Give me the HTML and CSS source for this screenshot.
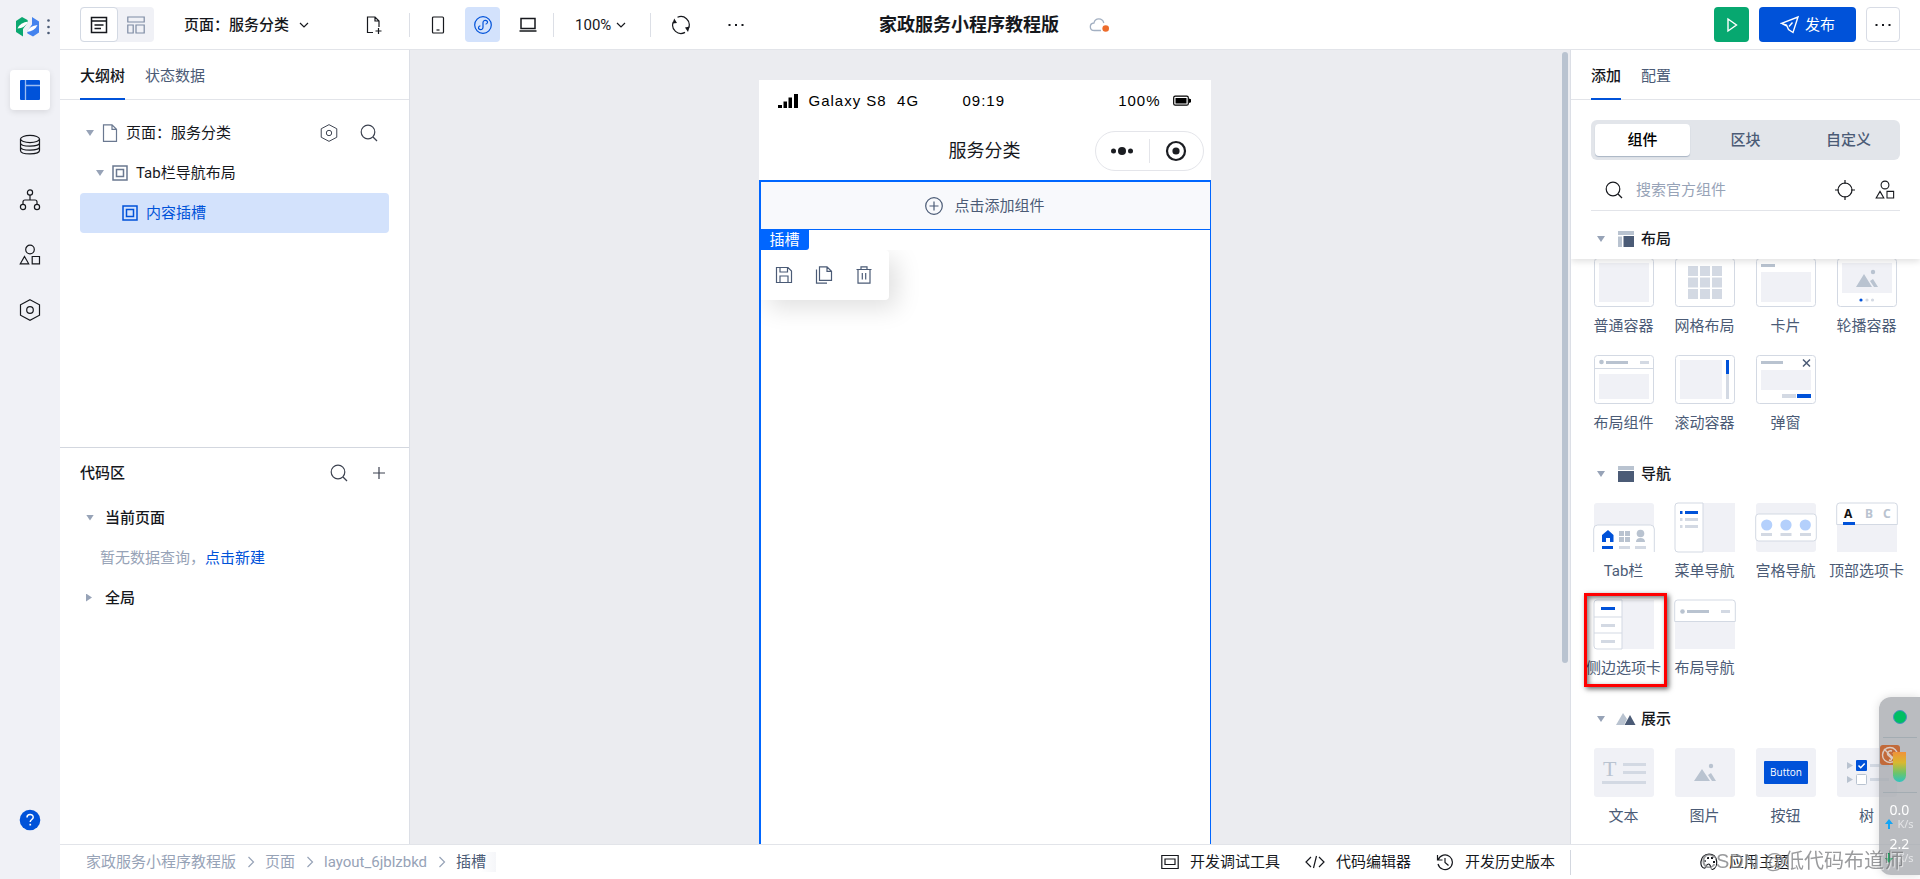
FILE: index.html
```html
<!DOCTYPE html>
<html lang="zh-CN">
<head>
<meta charset="utf-8">
<title>家政服务小程序教程版</title>
<link rel="stylesheet" href="styles.css">
</head>
<body>
<svg class="sprite" aria-hidden="true">
  <symbol id="search" viewBox="0 0 18 18"><circle cx="8" cy="8" r="6.8"/><path d="M13 13l4 4"/></symbol>
  <symbol id="chevron" viewBox="0 0 12 12"><path d="M2 4l4 4 4-4"/></symbol>
  <symbol id="crumb" viewBox="0 0 8 12"><path d="M1.5 1l5 5-5 5"/></symbol>
  <symbol id="shapes" viewBox="0 0 22 22"><circle cx="11" cy="5.5" r="4.3"/><path d="M5.5 12.5l4.2 7.3H1.3zM13.2 12.5h7.3v7.3h-7.3z"/></symbol>
  <symbol id="slot" viewBox="0 0 16 16"><path d="M1 1h14v14H1z M4.5 4.5h7v7h-7z"/></symbol>
  <symbol id="hexagon" viewBox="0 0 22 22"><path d="M11 .8l9.5 5v10.4l-9.5 5-9.5-5V5.800z"/><circle cx="11" cy="11" r="3.300"/></symbol>
  <symbol id="dots" viewBox="0 0 18 18"><path class="solid" d="M1.500 8h2v2h-2zM8 8h2v2H8zM14.500 8h2v2h-2z"/></symbol>
</svg>
<div class="app">
  <nav class="rail" aria-label="主导航">
    <button class="brand" aria-label="首页">
      <svg width="36" height="22" viewBox="0 0 36 22">
        <path fill="#0ba870" d="M0 5l6-4 5.500 3 .5 2-5 7v7.500L0 16z"/>
        <path fill="#fff" d="M1.500 12.500Q4 6.500 12.500 5.500 9 12 1.500 12.500z"/>
        <g transform="rotate(180 11.500 10.800)"><path fill="#4483ee" d="M0 5l6-4 5.500 3 .5 2-5 7v7.500L0 16z"/><path fill="#fff" d="M1.500 12.500Q4 6.500 12.500 5.500 9 12 1.500 12.500z"/></g>
        <circle cx="32.500" cy="4.500" r="1.300" fill="#4b5b76"/><circle cx="32.500" cy="11" r="1.300" fill="#4b5b76"/><circle cx="32.500" cy="17" r="1.300" fill="#4b5b76"/>
      </svg>
    </button>
    <button class="rail-item active" aria-label="页面设计">
      <svg width="20" height="20" viewBox="0 0 20 20"><rect width="20" height="20" rx="1" fill="#0052d9"/><path d="M5.500 0v20M5.500 5.500H20" stroke="#9bbcf2" stroke-width="1.300"/></svg>
    </button>
    <button class="rail-item" aria-label="数据源">
      <svg class="ico" width="22" height="22" viewBox="0 0 22 22"><ellipse cx="11" cy="5" rx="9.500" ry="3.600"/><path d="M1.500 5v11.500c0 4.600 19 4.600 19 0V5M1.500 9c0 4.200 19 4.200 19 0M1.500 13c0 4.200 19 4.200 19 0"/></svg>
    </button>
    <button class="rail-item" aria-label="流程">
      <svg class="ico" width="22" height="22" viewBox="0 0 22 22"><circle cx="11" cy="3.500" r="2.600"/><circle cx="4" cy="18" r="2.600"/><circle cx="18" cy="18" r="2.600"/><path d="M11 6v5M4 15.400V13q0-2 2-2h10q2 0 2 2v2.400"/></svg>
    </button>
    <button class="rail-item" aria-label="组件库"><svg class="ico" width="22" height="22"><use href="#shapes"/></svg></button>
    <button class="rail-item" aria-label="设置"><svg class="ico" width="22" height="22"><use href="#hexagon"/></svg></button>
    <button class="rail-item help" aria-label="帮助">
      <svg width="22" height="22" viewBox="0 0 22 22"><circle cx="11" cy="11" r="10.300" fill="#0052d9"/><path d="M8 8.500c0-4 6.200-3.800 6.200-.3 0 2.300-3 2.300-3 4.900" fill="none" stroke="#fff" stroke-width="1.500"/><path d="M10.400 14.800h1.700v1.700h-1.700z" fill="#fff"/></svg>
    </button>
  </nav>

  <div class="workspace">
    <header class="topbar">
      <div class="tools">
        <div class="view-toggle">
          <button class="toggle on" aria-label="大纲"><svg class="ico thick" width="18" height="18" viewBox="0 0 18 18"><path d="M1.500 1.500h15v15h-15zM1.500 5h15M4.500 9h9M4.500 12.500h6.500"/></svg></button>
          <button class="toggle" aria-label="布局"><svg class="ico slate" width="18" height="18" viewBox="0 0 18 18"><path d="M.8 1h16.400v5H.8zM.8 9h5.400v8H.8zM9 9h8.200v8H9z"/></svg></button>
        </div>
        <button class="page-pick">页面：服务分类 <svg class="ico" width="12" height="12"><use href="#chevron"/></svg></button>
        <button class="tool add-page" aria-label="新建页面"><svg class="ico" width="18" height="20" viewBox="0 0 18 20"><path d="M8 17.500H2.500V2H10l4 4v6M10 2v4h4M13.500 13v6M10.500 16h6"/></svg></button>
        <span class="rule"></span>
        <div class="devices">
          <button class="tool" aria-label="手机"><svg class="ico" width="14" height="18" viewBox="0 0 14 18"><rect x="1.500" y="1" width="11" height="16" rx="1"/><path d="M5.500 14h3"/></svg></button>
          <button class="tool on" aria-label="小程序"><svg class="ico" width="18" height="18" viewBox="0 0 18 18"><circle cx="9" cy="9" r="8.300"/><path d="M9 11.300c0 3.500-5 2.700-4.500.2.200-1 1-1.400 1.900-1.700M9 11.300V6.700c0-3.500 5-2.700 4.500-.2-.2 1-1 1.400-1.900 1.700"/></svg></button>
          <button class="tool" aria-label="电脑"><svg class="ico thick" width="18" height="16" viewBox="0 0 18 16"><path d="M2 1.500h14v10H2zM.5 14h17"/></svg></button>
        </div>
        <span class="rule"></span>
        <button class="zoom">100% <svg class="ico" width="12" height="12"><use href="#chevron"/></svg></button>
        <span class="rule"></span>
        <button class="tool refresh" aria-label="刷新"><svg class="ico" width="20" height="20" viewBox="0 0 20 20"><path d="M6.500 2.300a8.300 8.300 0 0 1 11.300 10.200M14 17.400A8.300 8.300 0 0 1 2.300 7"/><path class="solid" d="M1.500 8.500L3.200 3.500 6 8zM18.700 11.500L17 17l-3-4.500z"/></svg></button>
        <button class="tool" aria-label="更多"><svg class="ico" width="18" height="18"><use href="#dots"/></svg></button>
      </div>
      <div class="project">
        <h1>家政服务小程序教程版</h1>
        <svg width="22" height="16" viewBox="0 0 22 16"><path d="M12 13.500H5.500C0 13.500 0 6.500 5 6 6 .5 13.500.5 14.800 6" fill="none" stroke="#a3b0c2" stroke-width="1.300"/><circle cx="16.700" cy="11.500" r="3.300" fill="#ed6c2b"/></svg>
      </div>
      <div class="actions">
        <button class="run" aria-label="预览"><svg width="18" height="18" viewBox="0 0 18 18"><path d="M5 3l8.500 6L5 15z" fill="none" stroke="#fff" stroke-width="1.400"/></svg></button>
        <button class="publish"><svg width="20" height="20" viewBox="0 0 20 20"><path d="M1.500 8.300L18 2l-5 15.500-4.500-3-2-4.500zM9 11.500l3.500-4M2 8.500l5 2.500" fill="none" stroke="#fff" stroke-width="1.400"/></svg>发布</button>
        <button class="more" aria-label="更多操作"><svg class="ico" width="18" height="18"><use href="#dots"/></svg></button>
      </div>
    </header>

    <div class="main">
      <aside class="left">
        <section class="half">
          <div class="tabs" role="tablist"><button class="tab on" role="tab">大纲树</button><button class="tab" role="tab">状态数据</button></div>
          <ul class="tree">
            <li class="node"><i class="caret"></i><svg class="ico slate" width="16" height="18" viewBox="0 0 16 18"><path d="M1.500.8H10l4.500 4.500v12h-13zM10 .8v4.500h4.500"/></svg><span>页面：服务分类</span>
              <span class="node-tools"><button class="tool-s" aria-label="页面设置"><svg class="ico" width="18" height="18"><use href="#hexagon"/></svg></button><button class="tool-s" aria-label="搜索"><svg class="ico" width="18" height="18"><use href="#search"/></svg></button></span></li>
            <li class="node lv2"><i class="caret"></i><svg class="ico thick slate" width="16" height="16"><use href="#slot"/></svg><span>Tab栏导航布局</span></li>
            <li class="node lv3 selected"><svg class="ico thick" width="16" height="16"><use href="#slot"/></svg><span>内容插槽</span></li>
          </ul>
        </section>
        <section class="half code">
          <div class="code-head"><h2>代码区</h2><span class="node-tools"><button class="tool-s" aria-label="搜索代码"><svg class="ico" width="18" height="18"><use href="#search"/></svg></button><button class="tool-s" aria-label="新建"><svg class="ico" width="18" height="18" viewBox="0 0 18 18"><path d="M9 3v12M3 9h12"/></svg></button></span></div>
          <div class="group"><i class="caret"></i>当前页面</div>
          <p class="empty">暂无数据查询，<a href="#new">点击新建</a></p>
          <div class="group"><i class="caret closed"></i>全局</div>
        </section>
      </aside>

      <main class="canvas">
        <div class="phone">
          <div class="status">
            <svg width="22" height="16" viewBox="0 0 22 16"><path d="M1 12h4v3H1zM6.500 8.500h3.500V15H6.500zM11.500 4.500H15V15h-3.500zM17 1h4v14h-4z"/></svg>
            <span class="carrier">Galaxy S8&nbsp; 4G</span><span class="clock">09:19</span><span class="charge">100%</span>
            <svg width="18" height="12" viewBox="0 0 18 12"><rect x=".7" y="1.200" width="14.600" height="9" rx="1.500" fill="none" stroke="#000" stroke-width="1.200"/><path d="M2.500 3h11v5.500h-11zM16 3.500l2 .8v3l-2 .8z"/></svg>
          </div>
          <div class="nav-title"><span>服务分类</span>
            <div class="capsule">
              <button aria-label="菜单"><svg width="24" height="10" viewBox="0 0 24 10"><circle cx="3.500" cy="5" r="2.500"/><circle cx="12" cy="5" r="4"/><circle cx="20.500" cy="5" r="2.500"/></svg></button>
              <button aria-label="关闭"><svg width="22" height="22" viewBox="0 0 22 22"><circle cx="11" cy="11" r="9" fill="none" stroke="#1b1d22" stroke-width="2.200"/><circle cx="11" cy="11" r="3.600"/></svg></button>
            </div>
          </div>
          <div class="selection">
            <button class="add"><svg class="ico" width="18" height="18" viewBox="0 0 18 18"><circle cx="9" cy="9" r="8.300"/><path d="M9 4.500v9M4.500 9h9"/></svg>点击添加组件</button>
            <div class="tag">插槽</div>
            <div class="mini-tools">
              <button aria-label="保存"><svg class="ico" width="18" height="18" viewBox="0 0 18 18"><path d="M1.500 1.500H13l3.500 3.500v11.500h-15zM5 1.500V6h7.500V1.500M5 16.500V10h8v6.500"/></svg></button>
              <button aria-label="复制"><svg class="ico" width="18" height="18" viewBox="0 0 18 18"><path d="M4.500.8h7.500l4.500 4.500v9h-12zM12 .8v4.500h4.500M1.500 3.500v13.700h10.500"/></svg></button>
              <button aria-label="删除"><svg class="ico" width="18" height="18" viewBox="0 0 18 18"><path d="M1.500 3.500h15M6 3.500V.8h6v2.700M3 3.500v13.700h12V3.500M7.300 7v6.500M10.700 7v6.500"/></svg></button>
            </div>
          </div>
        </div>
        <span class="scroll-thumb"></span>
      </main>

      <aside class="right">
        <div class="tabs" role="tablist"><button class="tab on" role="tab">添加</button><button class="tab" role="tab">配置</button></div>
        <div class="segments"><button class="seg on">组件</button><button class="seg">区块</button><button class="seg">自定义</button></div>
        <div class="search"><svg class="ico" width="18" height="18"><use href="#search"/></svg><input type="text" placeholder="搜索官方组件" aria-label="搜索官方组件">
          <button class="tool-s" aria-label="定位"><svg class="ico" width="20" height="20" viewBox="0 0 20 20"><circle cx="10" cy="10" r="7"/><path d="M10 0v4M10 16v4M0 10h4M16 10h4"/></svg></button>
          <button class="tool-s" aria-label="组件库"><svg class="ico" width="20" height="20"><use href="#shapes"/></svg></button></div>
        <div class="library">
          <section class="pack pinned">
            <h3><i class="caret"></i><svg width="16" height="16" viewBox="0 0 16 16"><path d="M0 0h16v4H0zM0 5.500h4V16H0z" fill="#b9c3d0"/><path d="M5.500 5H16v11H5.500z" fill="#4b5b76"/></svg>布局</h3>
            <div class="cells">
              <button class="cell"><svg width="60" height="49" viewBox="0 0 60 49"><rect class="frame" x=".5" y=".5" width="59" height="48" rx="3"/><path class="pale" d="M5 5h50v39H5z"/></svg>普通容器</button>
              <button class="cell"><svg width="60" height="49" viewBox="0 0 60 49"><rect class="frame" x=".5" y=".5" width="59" height="48" rx="3"/><path class="light" d="M13 8h10v10H13zM25 8h10v10H25zM37 8h10v10H37zM13 19.500h10v10H13zM25 19.500h10v10H25zM37 19.500h10v10H37zM13 31h10v10H13zM25 31h10v10H25zM37 31h10v10H37z"/></svg>网格布局</button>
              <button class="cell"><svg width="60" height="49" viewBox="0 0 60 49"><rect class="frame" x=".5" y=".5" width="59" height="48" rx="3"/><path class="mid" d="M5 6h14v3H5z"/><path class="pale" d="M5 14h50v30H5z"/></svg>卡片</button>
              <button class="cell"><svg width="60" height="49" viewBox="0 0 60 49"><rect class="frame" x=".5" y=".5" width="59" height="48" rx="3"/><path class="pale" d="M5 5h50v30H5z"/><path class="mid" d="M19 29l8-13 8 13zM33 23l3-2 5 8h-4z"/><circle class="mid" cx="36" cy="14" r="2.200"/><circle class="blue" cx="24" cy="42" r="1.600"/><circle class="light" cx="30" cy="42" r="1.600"/><circle class="light" cx="35.500" cy="42" r="1.600"/></svg>轮播容器</button>
              <button class="cell"><svg width="60" height="49" viewBox="0 0 60 49"><rect class="frame" x=".5" y=".5" width="59" height="48" rx="3"/><path class="edge" d="M0 13.500h60"/><circle class="mid" cx="7.500" cy="7" r="2.300"/><path class="mid" d="M12 6h22v3H12z"/><path class="light" d="M46 6h9v3h-9z"/><path class="pale" d="M5 19h50v25H5z"/></svg>布局组件</button>
              <button class="cell"><svg width="60" height="49" viewBox="0 0 60 49"><rect class="frame" x=".5" y=".5" width="59" height="48" rx="3"/><path class="pale" d="M5 5h42v39H5z"/><path class="light" d="M51 5h3v39h-3z"/><path class="blue" d="M51 5h3v14h-3z"/></svg>滚动容器</button>
              <button class="cell"><svg width="60" height="49" viewBox="0 0 60 49"><rect class="frame" x=".5" y=".5" width="59" height="48" rx="3"/><path class="mid" d="M5 6h22v3H5z"/><path d="M47 4.500l7 7M54 4.500l-7 7" stroke="#4b5b76" stroke-width="1.500"/><path class="pale" d="M5 15h50v20H5z"/><path class="light" d="M26 39h14v4H26z"/><path class="blue" d="M41 39h14v4H41z"/></svg>弹窗</button>
            </div>
          </section>
          <section class="pack">
            <h3><i class="caret"></i><svg width="16" height="16" viewBox="0 0 16 16"><path d="M0 0h16v4H0z" fill="#b9c3d0"/><path d="M0 5h16v11H0z" fill="#4b5b76"/></svg>导航</h3>
            <div class="cells">
              <button class="cell"><svg width="60" height="49" viewBox="0 0 60 49"><rect class="pale" width="60" height="40" rx="3"/><path class="frame" d="M-.3 49V26q0-4 4-4h52.600q4 0 4 4v23"/><path class="blue" d="M8 32l6-5 5.500 5v7H16v-4h-4v4H8zM8 43h11v3H8z"/><path class="mid" d="M25 28h5v5h-5zM31 28h5v5h-5zM25 34h5v5h-5zM31 34h5v5h-5zM42 39q0-4 4.500-4t4.500 4z"/><circle class="mid" cx="46.500" cy="30.500" r="3.800"/><path class="light" d="M25 43h11v3H25zM41 43h11v3H41z"/></svg>Tab栏</button>
              <button class="cell"><svg width="60" height="49" viewBox="0 0 60 49"><path class="pale" d="M20 0h40v49H20z"/><path class="frame" d="M28 0H3q-3 0-3 3v43q0 3 3 3h25z"/><path class="blue" d="M10 8h13v3H10zM5 8h2.500v3H5z"/><path class="light" d="M10 15h13v3H10zM5 15h2.500v3H5zM10 22h13v3H10zM5 22h2.500v3H5z"/></svg>菜单导航</button>
              <button class="cell"><svg width="60" height="49" viewBox="0 0 60 49"><rect class="pale" width="60" height="49" rx="3"/><rect class="frame" x="-.3" y="11" width="60.600" height="27" rx="3"/><g fill="#b4d0fc"><circle cx="10.700" cy="22" r="5.600"/><circle cx="30" cy="22" r="5.600"/><circle cx="49.300" cy="22" r="5.600"/></g><path class="light" d="M5 30h11v3H5zM24.500 30h11v3h-11zM44 30h11v3H44z"/></svg>宫格导航</button>
              <button class="cell"><svg width="60" height="49" viewBox="0 0 60 49"><path class="pale" d="M0 15h60v34H0z"/><path class="frame" d="M-.3 21.500V3q0-3 3-3h54.600q3 0 3 3v18.500z"/><text x="7" y="15" fill="#111">A</text><text x="28" y="15" fill="#b9c3d0">B</text><text x="46" y="15" fill="#b9c3d0">C</text><path class="blue" d="M6 19h12v3H6z"/></svg>顶部选项卡</button>
              <button class="cell marked"><svg width="60" height="49" viewBox="0 0 60 49"><path class="pale" d="M20 0h40v49H20z"/><path class="frame" d="M28 0H3q-3 0-3 3v43q0 3 3 3h25zM0 17h28M0 33h28"/><path class="blue" d="M7 7h14v3H7z"/><path class="light" d="M7 24h14v3H7zM7 40h14v3H7z"/></svg>侧边选项卡</button>
              <button class="cell"><svg width="60" height="49" viewBox="0 0 60 49"><path class="pale" d="M0 15h60v34H0z"/><path class="frame" d="M-.3 21.500V3q0-3 3-3h54.600q3 0 3 3v18.500z"/><circle class="mid" cx="7.500" cy="11.500" r="2.300"/><path class="mid" d="M12 10h22v3H12z"/><path class="light" d="M46 10h9v3h-9z"/></svg>布局导航</button>
            </div>
          </section>
          <section class="pack">
            <h3><i class="caret"></i><svg viewBox="2 0 16 14" height="14"><path d="M0 13L7 1l4 6-3 6z" fill="#b9c3d0"/><path d="M8.500 13L14 3l5.500 10z" fill="#4b5b76"/></svg>展示</h3>
            <div class="cells">
              <button class="cell"><svg width="60" height="49" viewBox="0 0 60 49"><rect class="pale" width="60" height="49" rx="3"/><text class="serif" x="9" y="28" fill="#b9c3d0">T</text><path class="light" d="M29 15h23v3H29zM29 23h23v3H29zM8 33h44v3H8z"/></svg>文本</button>
              <button class="cell"><svg width="60" height="49" viewBox="0 0 60 49"><rect class="pale" width="60" height="49" rx="3"/><path class="mid" d="M19 33l8-12 8 12zM33 27l3-2 5 8h-4z"/><circle class="mid" cx="36" cy="18" r="2.200"/></svg>图片</button>
              <button class="cell"><svg width="60" height="49" viewBox="0 0 60 49"><rect class="pale" width="60" height="49" rx="3"/><rect class="blue" x="8" y="13" width="44" height="23" rx="1"/><text class="btn" x="30" y="28" fill="#fff">Button</text></svg>按钮</button>
              <button class="cell"><svg width="60" height="49" viewBox="0 0 60 49"><rect class="pale" width="60" height="49" rx="3"/><path class="mid" d="M10 14l6 3.500-6 3.500zM10 28l6 3.500-6 3.500z"/><rect class="blue" x="19" y="12" width="11" height="11" rx="1"/><path d="M21.500 17.500l2.200 2.200 4-4.200" fill="none" stroke="#fff" stroke-width="1.500"/><rect class="frame box" x="19.500" y="26.500" width="10" height="10" rx="1"/><path class="light" d="M33 16h19v3H33zM33 30h19v3H33z"/></svg>树</button>
            </div>
          </section>
        </div>
      </aside>
    </div>

    <footer class="bottombar">
      <nav class="crumbs" aria-label="路径"><a href="#app">家政服务小程序教程版</a><svg class="ico" width="8" height="12"><use href="#crumb"/></svg><a href="#page">页面</a><svg class="ico" width="8" height="12"><use href="#crumb"/></svg><a href="#layout">layout_6jblzbkd</a><svg class="ico" width="8" height="12"><use href="#crumb"/></svg><a class="here" href="#slot">插槽</a></nav>
      <div class="dev-links">
        <button><svg class="ico" width="18" height="16" viewBox="0 0 18 16"><path d="M.8 1.500h16.400v13H.8zM4 5h10v5.500H4z"/></svg>开发调试工具</button>
        <button><svg class="ico" width="20" height="14" viewBox="0 0 20 14"><path d="M6 2L1 7l5 5M14 2l5 5-5 5M11.500 1l-3 12"/></svg>代码编辑器</button>
        <button><svg class="ico" width="18" height="18" viewBox="0 0 18 18"><path d="M2.300 6.500A7.300 7.300 0 1 1 2 11M1.500 2v5h5M9 5v4.500l3.500 3"/></svg>开发历史版本</button>
      </div>
      <div class="theme"><button><svg class="ico" width="18" height="18" viewBox="0 0 18 18"><path d="M9 1C-1 1-1 16 5 15c2-.3.500-4 3.500-4s1.500 6 4 5.500C19 14 18 1 9 1z"/><path class="solid" d="M4 7h2v2H4zM7 4h2v2H7zM11 4h2v2h-2zM13 8h2v2h-2z"/></svg>应用主题</button></div>
    </footer>
  </div>
</div>

<div class="monitor">
  <span class="lamp"></span>
  <div class="gauge"><svg class="badge" width="20" height="20" viewBox="0 0 20 20"><rect width="20" height="20" rx="3" fill="#c26a3a"/><g fill="none" stroke="#dccbc2" stroke-width="1.400"><circle cx="10" cy="10" r="7.500"/><path d="M4 4l12 12M12 6c-4-1-6 3-3 5s4 5 0 4M13 8c2 2 1 5-2 5"/></g></svg><span class="bar"></span></div>
  <div class="rate"><b>0.0</b><span><svg width="8" height="10" viewBox="0 0 8 10"><path d="M4 0l4 5H5v5H3V5H0z" fill="#12a5f5"/></svg>K/s</span></div>
  <div class="rate"><b>2.2</b><span><svg width="8" height="10" viewBox="0 0 8 10"><path d="M4 10l4-5H5V0H3v5H0z" fill="#0a9a50"/></svg>K/s</span></div>
</div>
<div class="watermark">CSDN @低代码布道师</div>
</body>
</html>
```
FILE: styles.css
```css
* { box-sizing: border-box; }
body {
  margin: 0;
  font: 15px/20px Roboto, "Noto Sans CJK SC", sans-serif;
  color: #16181d;
  background: #fff;
}
button {
  padding: 0;
  border: 0;
  background: none;
  font: inherit;
  color: inherit;
  display: flex;
  align-items: center;
  justify-content: center;
}
a { color: inherit; text-decoration: none; }
h1, h2, h3, p, ul { margin: 0; padding: 0; font-size: 15px; list-style: none; }
h2, h3 { font-weight: 500; }
svg { flex: none; display: block; }
.sprite { position: absolute; width: 0; height: 0; }
.ico { fill: none; stroke: currentColor; stroke-width: 1.2; }
.ico .solid, .solid { fill: currentColor; stroke: none; }
.ico.thick { stroke-width: 1.5; }
.slate { color: #6a7890; }

.app { display: flex; height: 100vh; overflow: hidden; }

/* Icon rail */
.rail {
  flex: none;
  width: 60px;
  padding: 16px 10px 39px;
  background: #f0f1f6;
  display: flex;
  flex-direction: column;
  gap: 15px;
}
.brand { height: 22px; margin-bottom: 17px; padding-left: 8px; }
.rail-item { height: 40px; border-radius: 4px; }
.rail-item.active { background: #fff; box-shadow: 0 2px 6px #0000001a; }
.help { margin-top: auto; }

.workspace { flex: 1; min-width: 0; display: flex; flex-direction: column; }

/* Top bar */
.topbar {
  flex: none;
  height: 50px;
  padding: 0 20px;
  border-bottom: 1px solid #e2e4e9;
  display: grid;
  grid-template-columns: 1fr auto 1fr;
  align-items: center;
}
.tools, .devices, .project, .actions { display: flex; align-items: center; }
.view-toggle { display: flex; width: 74px; height: 35px; background: #f0f1f6; border-radius: 4px; }
.toggle { flex: 1; color: #16181d; }
.toggle.on { border: 1px solid #d3d9e3; border-radius: 4px; background: #fff; }
.toggle .slate { color: #7d8ba3; }
.page-pick { margin-left: 30px; gap: 9px; font-weight: 500; }
.tool { width: 35px; height: 35px; border-radius: 4px; }
.tool.on { background: #d3e2fc; color: #0052d9; }
.add-page { margin: 0 18px 0 46px; }
.rule { width: 1px; height: 24px; background: #dcdfe6; }
.devices { margin: 0 8px 0 10px; gap: 10px; }
.zoom { margin: 0 23px 0 21px; gap: 4px; }
.refresh { margin: 0 20px 0 12px; }
.project { gap: 30px; padding-left: 10px; }
h1 { font-size: 18px; font-weight: 700; }
.actions { justify-content: flex-end; gap: 10px; }
.run { width: 35px; height: 35px; border-radius: 4px; background: #07a870; }
.publish { width: 97px; height: 35px; gap: 5px; border-radius: 4px; background: #0052d9; color: #fff; }
.more { width: 34px; height: 35px; border: 1px solid #d8dce5; border-radius: 4px; }

.main { flex: 1; min-height: 0; display: flex; }

/* Left panel */
.left { flex: none; width: 350px; border-right: 1px solid #dcdfe6; display: flex; flex-direction: column; }
.half { flex: 1; min-height: 0; }
.tabs { height: 50px; padding: 0 20px; border-bottom: 1px solid #e2e4e9; display: flex; gap: 20px; }
.tab { height: 50px; padding-top: 3px; border-bottom: 2px solid transparent; color: #4b5b76; }
.tab.on { border-color: #0052d9; color: #16181d; font-weight: 500; }
.tree { padding: 13px 20px 0; }
.node { height: 40px; padding-left: 6px; border-radius: 4px; display: flex; align-items: center; gap: 8px; }
.node.lv2 { padding-left: 16px; }
.node.lv3 { padding-left: 42px; }
.node.selected { background: #d3e2fc; color: #0052d9; }
.caret { flex: none; width: 8px; height: 6px; background: #97a3b7; clip-path: polygon(0 0, 100% 0, 50% 100%); }
.caret.closed { width: 6px; height: 8px; margin-right: 2px; clip-path: polygon(0 0, 100% 50%, 0 100%); }
.node-tools { margin-left: auto; display: flex; gap: 20px; padding-right: 10px; color: #3c4250; }
.tool-s { width: 20px; height: 20px; }
.code { border-top: 1px solid #d3d7df; padding: 0 20px; }
.code-head { height: 50px; display: flex; align-items: center; }
.code-head .node-tools { padding-right: 0; }
.group { height: 40px; padding-left: 6px; display: flex; align-items: center; gap: 11px; font-weight: 500; }
.empty { line-height: 40px; padding-left: 20px; color: #97a3b7; }
.empty a { color: #0052d9; }

/* Canvas */
.canvas { position: relative; flex: 1; min-width: 0; background: #ebecf0; padding: 30px 11px 0 0; display: flex; justify-content: center; }
.scroll-thumb { position: absolute; top: 2px; right: 2px; width: 6px; height: 77%; border-radius: 3px; background: #b9c3d0; }
.phone { width: 452px; background: #fff; display: flex; flex-direction: column; }
.status {
  height: 42px;
  padding: 0 20px 0 18px;
  display: flex;
  align-items: center;
  font-family: "Liberation Sans", Arial, sans-serif;
  letter-spacing: 1px;
  color: #000;
}
.carrier { width: 154px; margin-left: 10px; }
.charge { margin: 0 12px 0 auto; }
.nav-title { position: relative; height: 58px; display: flex; align-items: center; justify-content: center; font-size: 18px; }
.capsule { position: absolute; right: 7px; top: 9px; width: 109px; height: 40px; border: 1px solid #e4e5ea; border-radius: 20px; display: flex; align-items: center; fill: #1b1d22; }
.capsule button { flex: 1; height: 24px; }
.capsule button + button { border-left: 1px solid #e4e5ea; }
.selection { flex: 1; border: solid #0066ff; border-width: 2px 1px 0 2px; }
.add { width: 100%; height: 48px; gap: 11px; border-bottom: 1px solid #0066ff; background: #f8f9fc; color: #4b5b76; }
.tag { width: 48px; height: 20px; background: #0066ff; color: #fff; text-align: center; border-radius: 0 0 3px 0; }
.mini-tools { width: 128px; height: 50px; padding: 0 14px; border-radius: 0 4px 4px 0; background: #fff; box-shadow: 8px 8px 24px #00000020; clip-path: inset(0 -40px -40px 0); display: flex; align-items: center; gap: 22px; color: #4b5b76; }

/* Component library */
.right { flex: none; width: 350px; border-left: 1px solid #dcdfe6; display: flex; flex-direction: column; }
.right > .tabs { flex: none; }
.segments { flex: none; height: 40px; margin: 20px 20px 0; padding: 4px; border-radius: 6px; background: #e2e5ea; display: flex; gap: 8px; }
.seg { flex: 1; border-radius: 4px; color: #4b5b76; font-weight: 500; }
.seg.on { background: #fff; color: #000; box-shadow: 0 1px 1px #a9b4c4; }
.search { flex: none; height: 51px; margin: 0 20px; padding: 10px 5px 0 14px; border-bottom: 1px solid #e2e4e9; display: flex; align-items: center; gap: 13px; }
.search input { flex: 1; min-width: 0; padding: 0; border: 0; outline: 0; background: none; font: inherit; }
.search input::placeholder { color: #97a3b7; }
.search .tool-s + .tool-s { margin-left: 7px; }
.library { flex: 1; min-height: 0; overflow: hidden; padding-top: 8px; }
.pack { padding-bottom: 2px; }
.pack h3 { height: 40px; padding-left: 26px; display: flex; align-items: center; gap: 7px; }
.pack h3 .caret { margin-right: 6px; }
.pack h3 svg { width: 16px; overflow: visible; }
.cells { padding: 9px 13px 0 12px; display: grid; grid-template-columns: repeat(4, 1fr); }
.pinned h3 { position: relative; z-index: 1; background: #fff; box-shadow: 0 3px 6px #0000001c; clip-path: inset(0 0 -12px 0); }
.pinned .cells { padding-top: 0; margin-top: -1px; }
.cell { position: relative; flex-direction: column; gap: 9px; padding-bottom: 19px; white-space: nowrap; color: #4b5b76; }
.cell svg { overflow: visible; }
.cell text { font: 700 12px "Noto Sans", sans-serif; }
.cell .serif { font: 22px "Liberation Serif", serif; }
.cell .btn { font: 10px "Open Sans", sans-serif; text-anchor: middle; }
.frame { fill: #fff; stroke: #d3d9e3; }
.frame.box { stroke: #b9c3d0; }
.edge { stroke: #d3d9e3; }
.pale { fill: #f0f1f6; }
.light { fill: #d3d9e3; }
.mid { fill: #b9c3d0; }
.blue { fill: #0052d9; }
.marked::after { content: ""; position: absolute; inset: -7px -3px 10px 1px; border: 3px solid #f00; box-shadow: 2px 2px 5px #0009, inset 2px 2px 5px #0008; }

/* Bottom bar */
.bottombar { flex: none; height: 35px; border-top: 1px solid #e2e4e9; display: flex; align-items: center; }
.crumbs { flex: 1; padding-left: 26px; display: flex; align-items: center; gap: 11px; color: #97a3b7; }
.crumbs a + svg + a { margin-left: -1px; }
.crumbs .here { padding-right: 10px; color: #4b5b76; background: linear-gradient(90deg, #fff 60%, #f5f6f9); }
.dev-links { padding-right: 15px; display: flex; gap: 25px; }
.dev-links button, .theme button { gap: 11px; }
.theme { width: 350px; height: 25px; border-left: 1px solid #d3d7df; display: flex; align-items: center; padding-left: 129px; }

/* Network monitor overlay */
.monitor {
  position: fixed;
  right: 0;
  bottom: 4px;
  width: 41px;
  height: 178px;
  padding-top: 13px;
  border-radius: 12px 0 0 12px;
  background: #a9abb0cc;
  box-shadow: 0 0 10px #0002;
  display: flex;
  flex-direction: column;
  align-items: center;
  color: #fff;
}
.lamp { width: 14px; height: 14px; border: 1px solid #4a92c0; border-radius: 7px; background: #00bf63; }
.gauge { position: relative; width: 34px; height: 56px; margin: 13px 0 10px; border: solid #a3acb2; border-width: 1px 0; }
.badge { position: absolute; left: -3px; top: 7px; }
.bar { position: absolute; left: 10px; top: 14px; width: 13px; height: 30px; border-radius: 0 0 7px 7px; background: linear-gradient(#f0923a, #d9b82f 35%, #6cc46a 70%, #2fc3c0); }
.rate { display: flex; flex-direction: column; align-items: center; font: 14px/14px "Noto Sans", sans-serif; margin-bottom: 6px; }
.rate b { font-weight: 400; }
.rate span { display: flex; align-items: center; gap: 4px; font-size: 11px; color: #e4e5e7; }
.watermark {
  position: fixed;
  right: 16px;
  bottom: 4px;
  font: 20px/28px "Liberation Sans", "Noto Sans CJK SC", sans-serif;
  color: #6f7073b3;
  text-shadow: 1px 1px 0 #fff8;
}
```
